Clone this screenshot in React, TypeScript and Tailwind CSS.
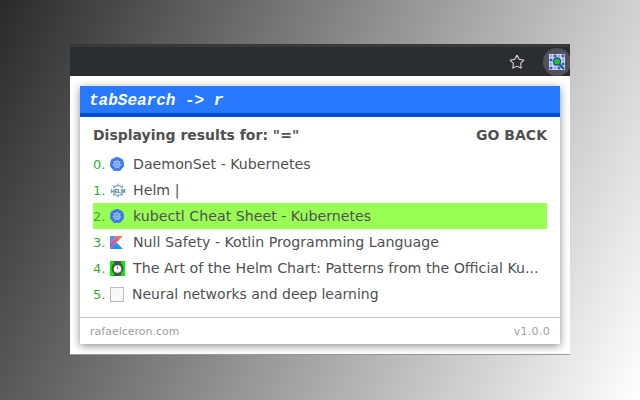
import { Star } from 'lucide-react';
import type { ReactNode } from 'react';

function K8sIcon() {
    const spokes = [0, 51, 103, 154, 206, 257, 309];
    return (
        <svg width="14" height="14" viewBox="0 0 14 14" className="shrink-0">
            <polygon points="7,0 12.6,2.7 14,8.7 10.1,13.6 3.9,13.6 0,8.7 1.4,2.7" fill="#3b78e7" strokeLinejoin="round" stroke="#3b78e7" strokeWidth="0.8" />
            <circle cx="7" cy="7.2" r="3.1" fill="none" stroke="#b9cff5" strokeWidth="1" />
            {spokes.map((a) => (
                <line key={a} x1="7" y1="7.2" x2="7" y2="2.4" stroke="#b9cff5" strokeWidth="0.6" transform={`rotate(${a} 7 7.2)`} />
            ))}
        </svg>
    );
}

function HelmIcon() {
    const spokes = [0, 45, 90, 135, 180, 225, 270, 315];
    return (
        <svg width="16" height="15" viewBox="0 0 16 15" className="shrink-0">
            <circle cx="8" cy="7.5" r="5" fill="none" stroke="#7fb0c6" strokeWidth="1.5" />
            {spokes.map((a) => (
                <line key={a} x1="8" y1="0.5" x2="8" y2="3" stroke="#7fb0c6" strokeWidth="1.3" transform={`rotate(${a} 8 7.5)`} />
            ))}
            <rect x="0" y="5" width="16" height="5" fill="#fff" />
            <text x="8" y="9.6" textAnchor="middle" fontSize="5.2" fontWeight="700" fill="#2f6d8c" fontFamily="Liberation Sans, sans-serif">
                HELM
            </text>
        </svg>
    );
}

function KotlinIcon() {
    return (
        <svg width="13" height="13" viewBox="0 0 13 13" className="shrink-0">
            <defs>
                <linearGradient id="kt" x1="1" y1="0" x2="0" y2="1">
                    <stop offset="0" stopColor="#f18e33" />
                    <stop offset="0.6" stopColor="#d0569e" />
                    <stop offset="1" stopColor="#8f5fd0" />
                </linearGradient>
            </defs>
            <polygon points="0,0 6.5,0 0,7" fill="#5a8ee6" />
            <polygon points="6.5,0 13,0 0,13 0,7" fill="url(#kt)" />
            <polygon points="0,13 6.5,6.5 13,13" fill="#1e96e0" />
        </svg>
    );
}

function WatchIcon() {
    return (
        <div className="w-[15px] h-[15px] bg-[#00f000] flex items-center justify-center shrink-0">
            <svg width="15" height="15" viewBox="0 0 15 15">
                <rect x="4" y="0" width="7" height="15" fill="#505050" />
                <circle cx="7.5" cy="7.5" r="6" fill="#505050" />
                <circle cx="7.5" cy="8" r="3.8" fill="#fff" />
                <path d="M7.5 5.5v2.6" fill="none" stroke="#666" strokeWidth="0.9" />
            </svg>
        </div>
    );
}

function ExtensionIcon() {
    return (
        <svg width="16" height="16" viewBox="0 0 16 16">
            <rect width="16" height="16" fill="#f2f4ff" />
            {[0, 1, 2, 3].map((r) =>
                [0, 1, 2, 3].map((c) => (
                    <rect key={`${r}-${c}`} x={c * 4 + 0.5} y={r * 4 + 0.5} width="3" height="3" fill={(r + c) % 2 ? '#3f4fe0' : '#98a2f2'} />
                ))
            )}
            <circle cx="8" cy="7.5" r="3.5" fill="#2bc02b" stroke="#0d5c6c" strokeWidth="1.3" />
            <line x1="10.5" y1="10.5" x2="15" y2="15" stroke="#0d5c6c" strokeWidth="2" />
        </svg>
    );
}

const rows: { title: string; icon: ReactNode; active?: boolean }[] = [
    { title: 'DaemonSet - Kubernetes', icon: <K8sIcon /> },
    { title: 'Helm |', icon: <HelmIcon /> },
    { title: 'kubectl Cheat Sheet - Kubernetes', icon: <K8sIcon />, active: true },
    { title: 'Null Safety - Kotlin Programming Language', icon: <KotlinIcon /> },
    { title: 'The Art of the Helm Chart: Patterns from the Official Ku...', icon: <WatchIcon /> },
    { title: 'Neural networks and deep learning', icon: <div className="w-[14px] h-[15px] border border-[#bbbbbb] bg-[#f8f8f8] shrink-0" /> },
];

export default function App() {
    return (
        <div className="w-[640px] h-[400px] overflow-hidden bg-[linear-gradient(114deg,#2a2a2a_0%,#ffffff_100%)] pt-[44px] pl-[70px] font-['DejaVu_Sans',sans-serif]">
            <div className="w-[500px] h-[311px] bg-white border-b border-[#9a9a9a] flex flex-col">
                <div className="h-[32px] shrink-0 bg-[#2b2e31] border-t-[3px] border-[#37393b] flex items-center justify-end gap-3 overflow-hidden">
                    <div className="w-7 h-7 flex items-center justify-center">
                        <Star size={16} strokeWidth={1.6} className="text-[#d8d8d8]" />
                    </div>
                    <div className="w-7 h-7 -mr-px rounded-full bg-[#505356] flex items-center justify-center">
                        <ExtensionIcon />
                    </div>
                </div>
                <div className="px-[10px] pt-[10px]">
                    <div className="h-[258px] bg-white shadow-[0_2px_8px_rgba(0,0,0,0.45)] flex flex-col">
                        <div className="h-[31px] shrink-0 bg-[#2979ff] border-b-4 border-[#0050cc] pl-[9px] pt-[2px] flex items-center font-['Liberation_Mono',monospace] italic font-bold text-base text-white">
                            tabSearch -&gt; r
                        </div>
                        <div className="flex-1 px-[13px] min-h-0">
                            <div className="flex items-center justify-between h-[34px] pt-[2px] text-[#505050] text-sm font-bold">
                                <span>Displaying results for: "="</span>
                                <span>GO BACK</span>
                            </div>
                            {rows.map((row, i) => (
                                <div key={i} className={`h-[26px] flex items-center text-[#505050] ${row.active ? 'bg-[#99ff55]' : ''}`}>
                                    <span className="w-[17px] shrink-0 pt-px text-[13px] text-[#35ad35]">{i}.</span>
                                    <div className={`shrink-0 flex items-center ${i === 5 ? 'w-[22px]' : 'w-[23px]'}`}>{row.icon}</div>
                                    <span className={`whitespace-nowrap ${i === 5 ? 'text-sm' : 'pt-[2px] text-[14.2px]'}`}>{row.title}</span>
                                </div>
                            ))}
                        </div>
                        <div className="h-[27px] shrink-0 border-t border-[#c4c4c4] px-[10px] pt-[2px] flex items-center justify-between text-[11px] text-[#a0a0a0]">
                            <span>rafaelceron.com</span>
                            <span className="tracking-[0.3px]">v1.0.0</span>
                        </div>
                    </div>
                </div>
            </div>
        </div>
    );
}
